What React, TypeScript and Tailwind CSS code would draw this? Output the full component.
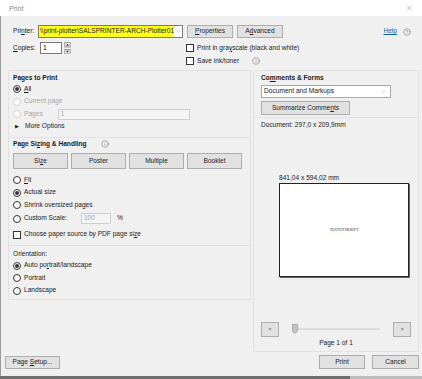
import { ChevronDown, CircleHelp, Info, X } from 'lucide-react'

const font = "font-['Liberation_Sans',Arial,sans-serif]"

function Radio({ label, checked = false, disabled = false }: { label: React.ReactNode; checked?: boolean; disabled?: boolean }) {
  return (
    <div className="flex h-[12.5px] items-center gap-[3px]">
      <span
        className={`flex size-[8px] items-center justify-center rounded-full border bg-white ${
          disabled ? 'border-[#d0d0d0] bg-[#f4f4f4]' : 'border-[#333]'
        }`}
      >
        {checked && <span className="size-[4px] rounded-full bg-[#333]" />}
      </span>
      <span className={disabled ? 'text-[#a6a6a6]' : 'text-[#1a1a1a]'}>{label}</span>
    </div>
  )
}

function Check({ label }: { label: React.ReactNode }) {
  return (
    <div className="flex items-center gap-[3px]">
      <span className="size-[8px] border border-[#333] bg-white" />
      <span className="text-[#1a1a1a]">{label}</span>
    </div>
  )
}

function Btn({ children, className = '' }: { children: React.ReactNode; className?: string }) {
  return (
    <div className={`flex items-center justify-center border border-[#adadad] bg-[#e1e1e1] text-[#1a1a1a] ${className}`}>
      <span>{children}</span>
    </div>
  )
}

const u = (s: string) => <span className="underline decoration-[0.5px] underline-offset-[1px]">{s}</span>

export default function App() {
  return (
    <div className={`${font} h-[379px] w-[422px] overflow-hidden bg-white text-[6.6px] leading-none`}>
      {/* title bar */}
      <div className="flex h-[16px] items-center justify-between pl-[9px] pr-[9px]">
        <span className="text-[7px] text-[#8a8a8a]">Print</span>
        <X size={8} strokeWidth={1.2} className="text-[#777]" />
      </div>

      <div className="flex h-[360px] flex-col border-l border-[#9a9a9a] bg-[#f0f0f0] pt-[9px]">
        {/* printer row */}
        <div className="flex h-[13px] items-center">
          <span className="w-[37px] pl-[12px] text-[#1a1a1a]">
            Pri{u('n')}ter:
          </span>
          <div className="flex h-[13px] w-[145px] items-center border border-[#7a7a7a] bg-white">
            <div className="flex h-full w-[136px] items-center overflow-hidden whitespace-nowrap bg-[#ffff1a] pl-[1px] text-[#1a1a1a]">
              {'\\\\print-plotter\\SALSPRINTER-ARCH-Plotter01'}
            </div>
            <ChevronDown size={7} strokeWidth={1.2} className="ml-[1px] text-[#777]" />
          </div>
          <Btn className="ml-[4px] h-[13px] w-[46px]">{u('P')}roperties</Btn>
          <Btn className="ml-[4px] h-[13px] w-[46px]">A{u('d')}vanced</Btn>
          <span className="ml-auto text-[#0b5fb5] underline">Help</span>
          <CircleHelp size={8} strokeWidth={1.3} className="ml-[6px] mr-[11px] text-[#555]" />
        </div>

        {/* copies row */}
        <div className="mt-[4px] flex h-[25px]">
          <div className="flex h-[12px] w-[185px] items-center">
            <span className="w-[39px] pl-[12px] text-[#1a1a1a]">{u('C')}opies:</span>
            <div className="flex h-[12px] w-[22px] items-center border border-[#7a7a7a] bg-white pl-[2px]">1</div>
            <div className="ml-[2px] flex h-[12px] w-[7px] flex-col justify-between">
              <svg width="7" height="5.5" viewBox="0 0 7 6">
                <rect x="0.5" y="0.5" width="6" height="5" fill="#e8e8e8" stroke="#999" />
                <path d="M2 4 L3.5 2 L5 4 Z" fill="#333" />
              </svg>
              <svg width="7" height="5.5" viewBox="0 0 7 6">
                <rect x="0.5" y="0.5" width="6" height="5" fill="#e8e8e8" stroke="#999" />
                <path d="M2 2 L3.5 4 L5 2 Z" fill="#333" />
              </svg>
            </div>
          </div>
          <div className="flex flex-col gap-[5px] pt-[2px]">
            <Check label={<>Print in gra{u('y')}scale (black and white)</>} />
            <div className="flex items-center">
              <Check label="Save ink/toner" />
              <Info size={8} strokeWidth={1.3} className="ml-[13px] text-[#555]" />
            </div>
          </div>
        </div>

        {/* main area */}
        <div className="mt-[3px] flex gap-[2px] pl-[7px]">
          <div className="flex w-[243px] flex-col">
            <div className="border border-[#e2e2e2] px-[4px] pb-[4px] pt-[2px]">
              <div className="flex h-[10px] items-center font-bold text-[#1a1a1a]">Pages to Print</div>
              <Radio checked label={<>{u('A')}ll</>} />
              <Radio disabled label="Current page" />
              <div className="flex items-center">
                <Radio disabled label="Pages" />
                <div className="ml-[15px] flex h-[11px] w-[132px] items-center border border-[#cfcfcf] bg-[#f4f4f4] pl-[2px] text-[#a6a6a6]">1</div>
              </div>
              <div className="flex h-[12.5px] items-center gap-[6px] pl-[2px] text-[#1a1a1a]">
                <span className="text-[5px]">▶</span>
                <span>More Options</span>
              </div>
            </div>

            <div className="border border-t-0 border-[#e2e2e2] px-[4px] pb-[4px] pt-[1px]">
              <div className="flex h-[10px] items-center font-bold text-[#1a1a1a]">
                <span>Page Si{u('z')}ing &amp; Handling</span>
                <Info size={8} strokeWidth={1.3} className="ml-[14px] font-normal text-[#555]" />
              </div>
              <div className="mt-[4px] flex gap-[3px]">
                <Btn className="h-[16px] w-[55px]">Si{u('z')}e</Btn>
                <Btn className="h-[16px] w-[55px]">Poster</Btn>
                <Btn className="h-[16px] w-[55px]">Multiple</Btn>
                <Btn className="h-[16px] w-[55px]">Booklet</Btn>
              </div>
              <div className="mt-[5px]">
                <Radio label={<>{u('F')}it</>} />
                <Radio checked label="Actual size" />
                <Radio label="Shrink oversized pages" />
                <div className="flex h-[14px] items-center">
                  <Radio label="Custom Scale:" />
                  <div className="ml-[14px] flex h-[11px] w-[30px] items-center border border-[#cfcfcf] bg-[#f4f4f4] pl-[2px] text-[#a6a6a6]">100</div>
                  <span className="ml-[6px] text-[#1a1a1a]">%</span>
                </div>
                <div className="mt-[3px] flex h-[12px] items-center">
                  <Check label={<>Choose paper source by PDF page si{u('z')}e</>} />
                </div>
              </div>
            </div>

            <div className="border border-t-0 border-[#e2e2e2] px-[4px] pb-[2px] pt-[4px]">
              <div className="flex h-[10px] items-center text-[#1a1a1a]">Orientation:</div>
              <Radio checked label={<>Auto po{u('r')}trait/landscape</>} />
              <Radio label="Portrait" />
              <Radio label="Landscape" />
            </div>
          </div>

          <div className="flex w-[166px] flex-col">
            <div className="border border-[#e2e2e2] px-[7px] pb-[2px] pt-[2px]">
              <div className="flex h-[10px] items-center font-bold text-[#1a1a1a]">
                <span>Co{u('m')}ments &amp; Forms</span>
              </div>
              <div className="mt-[2px] flex h-[13px] w-[130px] items-center justify-between border border-[#a9a9a9] bg-white pl-[2px] pr-[3px] text-[#1a1a1a]">
                <span>Document and Markups</span>
                <ChevronDown size={7} strokeWidth={1.2} className="text-[#777]" />
              </div>
              <Btn className="mt-[3px] h-[14px] w-[89px]">Summarize Comme{u('n')}ts</Btn>
            </div>

            <div className="flex h-[234px] flex-col border border-t-0 border-[#e2e2e2] px-[7px] pt-[2px]">
              <div className="flex h-[10px] items-center text-[#1a1a1a]">Document: 297,0 x 209,9mm</div>
              <div className="ml-[18px] mt-[43px] flex h-[10px] items-center text-[#1a1a1a]">841,04 x 594,02 mm</div>
              <div className="ml-[18px] flex h-[94px] w-[130px] items-center justify-center border border-[#222] bg-white shadow-[1px_1px_0_#666]">
                <span className="font-['Liberation_Serif',serif] text-[4px] text-[#333]">TESTUTSKRIFT</span>
              </div>
              <div className="mt-[45px] flex h-[15px] items-center">
                <Btn className="h-[15px] w-[18px] text-[5px]">&lt;</Btn>
                <div className="relative ml-[13px] h-[15px] w-[90px]">
                  <div className="absolute left-[2px] right-0 top-[6px] h-[2px] bg-[#dcdcdc]" />
                  <svg className="absolute left-0 top-[2px]" width="6" height="10" viewBox="0 0 6 10">
                    <path d="M0.5 0.5 H5.5 V7 L3 9.5 L0.5 7 Z" fill="#c4c4c4" stroke="#9a9a9a" strokeWidth="0.8" />
                  </svg>
                </div>
                <Btn className="ml-[13px] h-[15px] w-[18px] text-[5px]">&gt;</Btn>
              </div>
              <div className="mt-[1px] flex h-[10px] items-center justify-center text-[#1a1a1a]">Page 1 of 1</div>
            </div>
          </div>
        </div>

        {/* bottom buttons */}
        <div className="mt-auto flex items-end pb-[7px] pl-[4px] pr-[3px]">
          <Btn className="h-[13px] w-[55px]">Page {u('S')}etup...</Btn>
          <Btn className="ml-auto h-[14px] w-[46px]">Print</Btn>
          <Btn className="ml-[7px] h-[14px] w-[47px]">Cancel</Btn>
        </div>
      </div>
      <div className="flex h-[3px]">
        <div className="w-[350px] bg-[#6e6e6e]" />
        <div className="flex-1 bg-[#bdbdbd]" />
      </div>
    </div>
  )
}
